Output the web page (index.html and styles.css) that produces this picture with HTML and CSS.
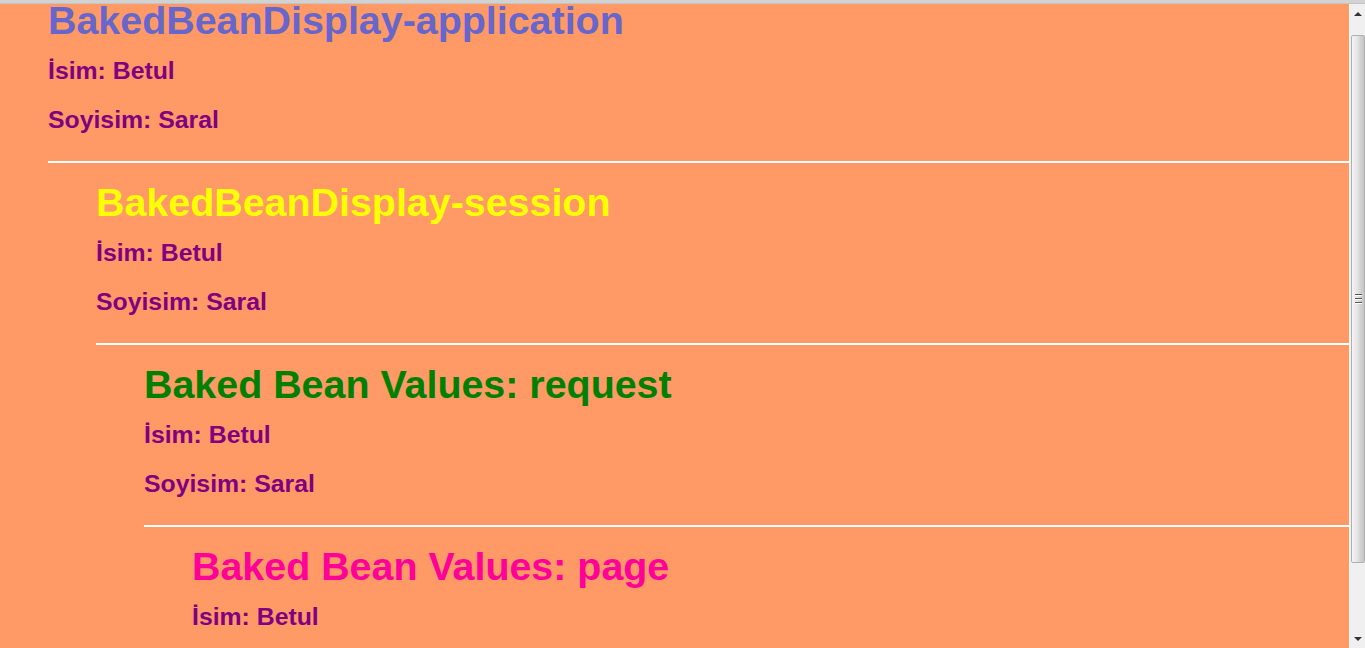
FILE: index.html
```html
<!DOCTYPE html>
<html lang="tr">
<head>
<meta charset="utf-8">
<title>BakedBeanDisplay</title>
<link rel="stylesheet" href="styles.css">
</head>
<body>
<div class="topbar"></div>
<div class="window">
  <main class="page">
    <section class="bean">
      <h1 class="title title-app">BakedBeanDisplay-application</h1>
      <p class="field">İsim: Betul</p>
      <p class="field">Soyisim: Saral</p>
      <hr class="rule">
      <section class="bean nested">
        <h1 class="title title-session">BakedBeanDisplay-session</h1>
        <p class="field">İsim: Betul</p>
        <p class="field">Soyisim: Saral</p>
        <hr class="rule">
        <section class="bean nested">
          <h1 class="title title-request">Baked Bean Values: request</h1>
          <p class="field">İsim: Betul</p>
          <p class="field">Soyisim: Saral</p>
          <hr class="rule">
          <section class="bean nested">
            <h1 class="title title-page">Baked Bean Values: page</h1>
            <p class="field">İsim: Betul</p>
            <p class="field">Soyisim: Saral</p>
          </section>
        </section>
      </section>
    </section>
  </main>
  <div class="scrollbar">
    <div class="sb-btn sb-up"><span class="arrow-up"></span></div>
    <div class="sb-track">
      <div class="sb-thumb">
        <div class="grip"><span></span><span></span><span></span></div>
      </div>
    </div>
    <div class="sb-btn sb-down"><span class="arrow-down"></span></div>
  </div>
</div>
</body>
</html>
```
FILE: styles.css
```css
html, body {
  margin: 0;
  padding: 0;
  height: 100%;
  overflow: hidden;
}
body {
  display: flex;
  flex-direction: column;
  background: #ff9966;
  font-family: "Liberation Sans", Arial, sans-serif;
}
.topbar {
  height: 4px;
  flex: none;
  background: #d2d2d2;
  border-bottom: 1px solid #c4c4c4;
  box-sizing: border-box;
}
.window {
  flex: 1;
  display: flex;
  min-height: 0;
}
.page {
  flex: 1;
  min-width: 0;
  overflow: hidden;
  padding-left: 48px;
}
.page > .bean {
  margin-top: -6px;
}
.nested {
  margin-left: 48px;
}
.title {
  margin: 0;
  font-size: 39.4px;
  line-height: 44px;
  font-weight: bold;
  white-space: nowrap;
}
.title-app { color: #6666cc; }
.title-session { color: #ffff00; }
.title-request { color: #008000; }
.title-page { color: #ff0099; }
.field {
  margin: 15px 0 0;
  font-size: 24.8px;
  line-height: 28px;
  font-weight: bold;
  color: #800080;
  white-space: nowrap;
}
.field + .field {
  margin-top: 21px;
}
.rule {
  border: none;
  height: 2px;
  background: #ffffff;
  margin: 27px 0 17px;
}
.scrollbar {
  width: 16px;
  flex: none;
  display: flex;
  flex-direction: column;
  background: #f0f0f0;
  border-left: 1px solid #fafafa;
  box-sizing: border-box;
}
.sb-btn {
  flex: none;
  display: flex;
  align-items: center;
  justify-content: center;
}
.sb-up { height: 20px; }
.sb-down { height: 18px; }
.arrow-up {
  width: 0;
  height: 0;
  border-left: 4px solid transparent;
  border-right: 4px solid transparent;
  border-bottom: 4px solid #333;
}
.arrow-down {
  width: 0;
  height: 0;
  border-left: 4px solid transparent;
  border-right: 4px solid transparent;
  border-top: 4px solid #333;
}
.sb-track {
  flex: 1;
  display: flex;
  flex-direction: column;
  padding: 11px 0 67px 1px;
}
.sb-thumb {
  flex: 1;
  border: 1px solid #b0b0b0;
  border-radius: 2px;
  background: linear-gradient(to right, #f4f4f4 0%, #e6e6e6 40%, #d0d0d0 75%, #c4c4c4 100%);
  display: flex;
  align-items: center;
  justify-content: center;
}
.grip {
  display: flex;
  flex-direction: column;
  gap: 2px;
}
.grip span {
  display: block;
  width: 7px;
  height: 1px;
  background: #555;
  border-bottom: 1px solid #fff;
}
```
